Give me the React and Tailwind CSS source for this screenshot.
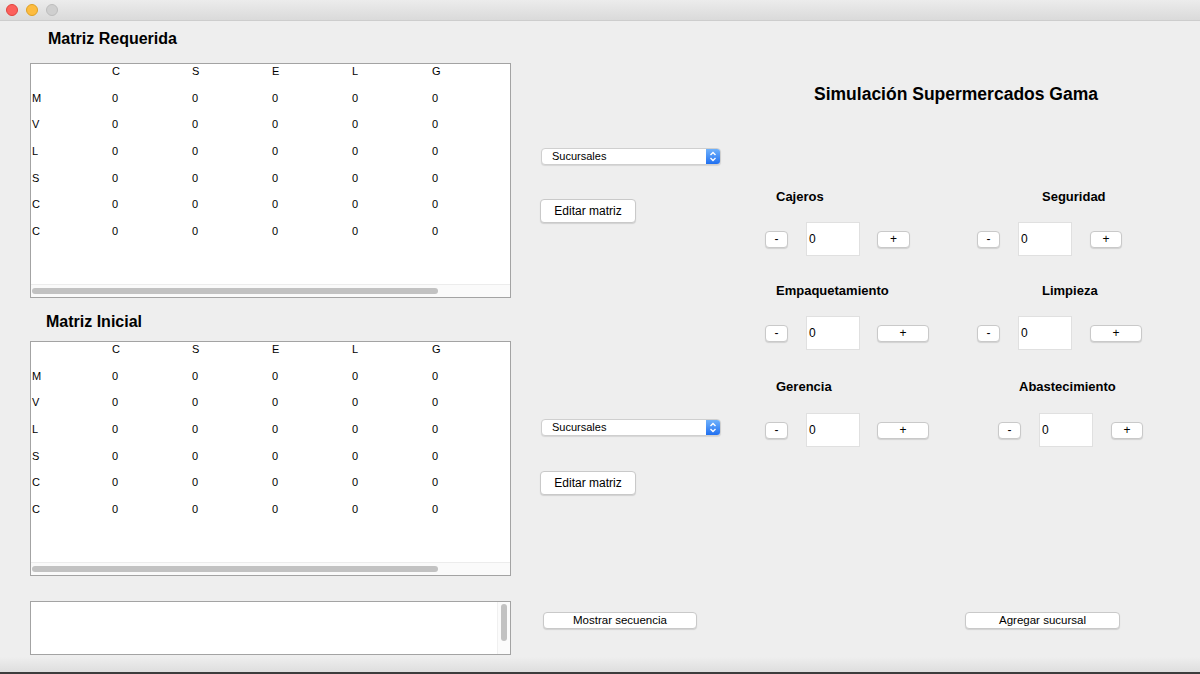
import { memo } from "react";

const COLS = ["C", "S", "E", "L", "G"];
const ROWS = ["M", "V", "L", "S", "C", "C"];

const Cell = ({ children }) => (
  <div className="w-[80px] shrink-0 pl-[1px] leading-[14px]">{children}</div>
);

const MatrixTable = () => (
  <div className="h-[235px] bg-white border border-[#a3a3a3] flex flex-col overflow-hidden text-[11px] text-black">
    <div className="flex-1">
      {/* header */}
      <div className="flex h-[26.67px]">
        <Cell />
        {COLS.map((c) => (
          <Cell key={c}>{c}</Cell>
        ))}
      </div>
      {ROWS.map((r, i) => (
        <div key={i} className="flex h-[26.67px]">
          <Cell>{r}</Cell>
          {COLS.map((c) => (
            <Cell key={c}>0</Cell>
          ))}
        </div>
      ))}
    </div>
    {/* horizontal scrollbar */}
    <div className="h-[13px] bg-[#fafafa] border-t border-[#ececec] flex items-center pl-[1px]">
      <div className="w-[406px] h-[6px] rounded-full bg-[#c2c2c2]" />
    </div>
  </div>
);

const AquaButton = ({ children, className }) => (
  <button
    className={
      "bg-white border border-[#c9c9c9] rounded-[4px] shadow-[0_1px_1px_rgba(0,0,0,0.12)] text-black flex items-center justify-center " +
      className
    }
  >
    {children}
  </button>
);

const Select = () => (
  <div className="ml-[1px] w-[180px] h-[17px] flex bg-white border border-[#cfcfcf] rounded-[4px] shadow-[0_1px_1px_rgba(0,0,0,0.1)] overflow-hidden">
    <div className="flex-1 pl-[10px] text-[11px] leading-[15px] text-black">Sucursales</div>
    <div className="w-[14px] h-full bg-gradient-to-b from-[#6fb1fb] to-[#1f6ff0] flex items-center justify-center">
      <svg width="8" height="11" viewBox="0 0 8 11" fill="none" stroke="white" strokeWidth="1.4">
        <path d="M1.5 4 L4 1.5 L6.5 4" />
        <path d="M1.5 7 L4 9.5 L6.5 7" />
      </svg>
    </div>
  </div>
);

const Spinner = ({ minus, field, plus }) => (
  <div className="flex items-center">
    <AquaButton className={"w-[23px] h-[17px] text-[12px] " + minus}>-</AquaButton>
    <div className={"w-[54px] h-[34px] bg-white border border-[#e0e0e0] text-[12px] leading-[32px] pl-[2px] text-black " + field}>
      0
    </div>
    <AquaButton className={"h-[17px] text-[12px] " + plus}>+</AquaButton>
  </div>
);

const Label = ({ children, className }) => (
  <div className={"text-[13px] font-bold leading-[16px] text-black " + className}>{children}</div>
);

const App = () => {
  return (
    <div className="w-[1200px] h-[674px] bg-[#eeeeee] flex flex-col overflow-hidden font-['Liberation_Sans',Arial,sans-serif]">
      {/* title bar */}
      <div className="h-[21px] shrink-0 bg-gradient-to-b from-[#ececec] to-[#dadada] border-b border-[#cdcdcd] flex items-center pl-[6px] gap-[8px]">
        <div className="w-[12px] h-[12px] rounded-full bg-[#fc605c] border border-[#e0443e]" />
        <div className="w-[12px] h-[12px] rounded-full bg-[#fdbc40] border border-[#dea123]" />
        <div className="w-[12px] h-[12px] rounded-full bg-[#cfcfcf] border border-[#bdbdbd]" />
      </div>

      <div className="flex flex-1">
        {/* left */}
        <div className="ml-[30px] w-[481px] flex flex-col">
          <div className="mt-[8px] pl-[18px] text-[16px] font-bold leading-[20px] text-black">Matriz Requerida</div>
          <div className="mt-[14px]">
            <MatrixTable />
          </div>
          <div className="mt-[14px] pl-[16px] text-[16px] font-bold leading-[20px] text-black">Matriz Inicial</div>
          <div className="mt-[9px]">
            <MatrixTable />
          </div>
          <div className="mt-[25px] h-[54px] bg-white border border-[#a3a3a3] flex justify-end">
            <div className="w-[13px] h-full border-l border-[#f0f0f0] bg-[#fbfbfb] pt-[2px] flex justify-center">
              <div className="w-[6px] h-[37px] rounded-full bg-[#c2c2c2]" />
            </div>
          </div>
        </div>

        {/* middle */}
        <div className="ml-[29px] w-[181px] flex flex-col">
          <div className="mt-[127px]">
            <Select />
          </div>
          <AquaButton className="mt-[34px] w-[96px] h-[24px] text-[12px]">Editar matriz</AquaButton>
          <div className="mt-[196px]">
            <Select />
          </div>
          <AquaButton className="mt-[35px] w-[96px] h-[24px] text-[12px]">Editar matriz</AquaButton>
          <AquaButton className="mt-[117px] ml-[3px] w-[154px] h-[17px] text-[11.5px]">Mostrar secuencia</AquaButton>
        </div>

        {/* right */}
        <div className="ml-[39px] w-[440px] flex flex-col">
          <div className="mt-[62px] pl-[54px] text-[17.5px] font-bold leading-[22px] text-black">
            Simulación Supermercados Gama
          </div>

          <div className="mt-[84px] flex">
            <div className="w-[211px]">
              <Label className="ml-[16px]">Cajeros</Label>
              <div className="mt-[17px]">
                <Spinner minus="ml-[5px]" field="ml-[18px]" plus="ml-[17px] w-[33px]" />
              </div>
            </div>
            <div>
              <Label className="ml-[71px]">Seguridad</Label>
              <div className="mt-[17px]">
                <Spinner minus="ml-[6px]" field="ml-[18px]" plus="ml-[18px] w-[32px]" />
              </div>
            </div>
          </div>

          <div className="mt-[27px] flex">
            <div className="w-[211px]">
              <Label className="ml-[16px]">Empaquetamiento</Label>
              <div className="mt-[17px]">
                <Spinner minus="ml-[5px]" field="ml-[18px]" plus="ml-[17px] w-[52px]" />
              </div>
            </div>
            <div>
              <Label className="ml-[71px]">Limpieza</Label>
              <div className="mt-[17px]">
                <Spinner minus="ml-[6px]" field="ml-[18px]" plus="ml-[18px] w-[52px]" />
              </div>
            </div>
          </div>

          <div className="mt-[29px] flex">
            <div className="w-[211px]">
              <Label className="ml-[16px]">Gerencia</Label>
              <div className="mt-[18px]">
                <Spinner minus="ml-[5px]" field="ml-[18px]" plus="ml-[17px] w-[52px]" />
              </div>
            </div>
            <div>
              <Label className="ml-[48px]">Abastecimiento</Label>
              <div className="mt-[18px]">
                <Spinner minus="ml-[27px]" field="ml-[18px]" plus="ml-[18px] w-[32px]" />
              </div>
            </div>
          </div>

          <AquaButton className="mt-[165px] ml-[205px] w-[155px] h-[17px] text-[11.5px]">Agregar sucursal</AquaButton>
        </div>
      </div>

      {/* window bottom shadow */}
      <div className="h-[17px] shrink-0 flex flex-col">
        <div className="flex-1 bg-gradient-to-b from-[#eeeeee] to-[#dedede]" />
        <div className="h-[2px] bg-[#3c3c3c]" />
      </div>
    </div>
  );
};

export default memo(App);
